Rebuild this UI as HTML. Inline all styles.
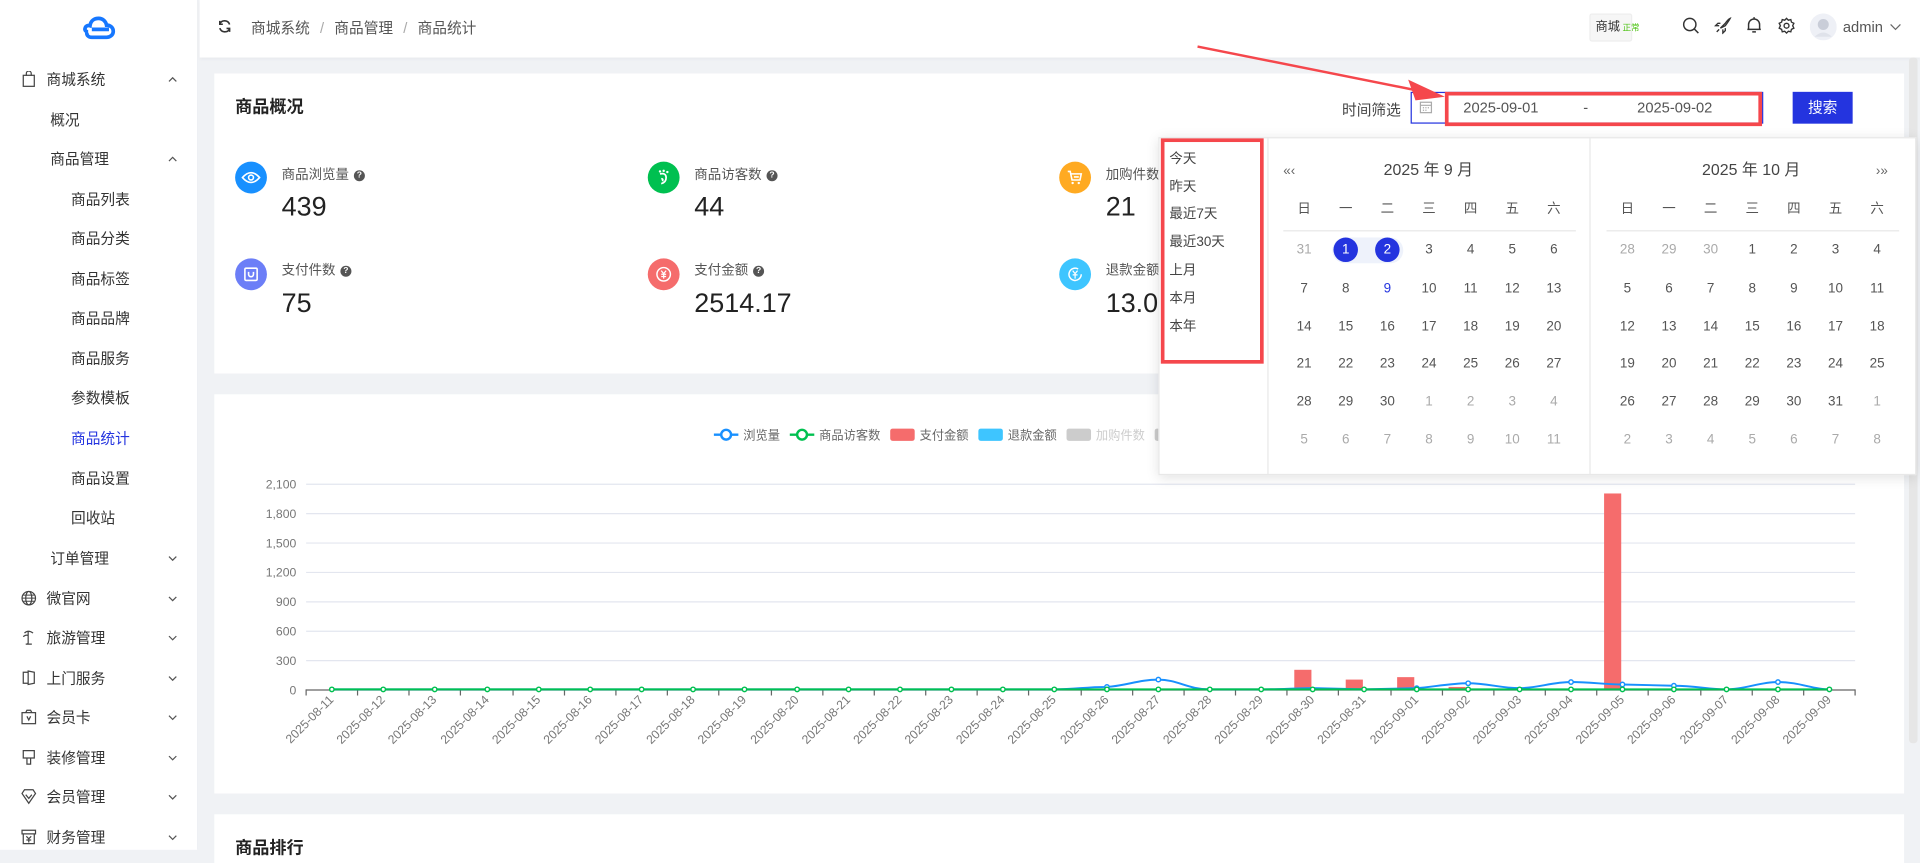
<!DOCTYPE html>
<html><head><meta charset="utf-8">
<style>
*{margin:0;padding:0;box-sizing:border-box}
html,body{width:1920px;height:850px;overflow:hidden;background:#f0f2f5;font-family:"Liberation Sans","Noto Sans CJK SC",sans-serif;color:#333}
#w{position:absolute;left:0;top:0;width:1568px;height:694px;transform:scale(1.22449);transform-origin:0 0;background:#f0f2f5}
.a{position:absolute;white-space:nowrap}
.side{position:absolute;left:0;top:0;width:162px;height:694px;background:#fff;border-right:1px solid #eceef2}
.m{position:absolute;font-size:12px;color:#333;line-height:14px}
.chev{position:absolute;left:136px;width:10px;height:10px}
.hdr{position:absolute;left:163px;top:0;width:1405px;height:47px;background:#fff;box-shadow:0 1px 3px rgba(0,0,0,.04)}
.card{position:absolute;background:#fff}
.ic{position:absolute;width:26px;height:26px;border-radius:50%}
.lbl{position:absolute;font-size:11px;color:#555}
.val{position:absolute;font-size:22px;color:#222}
.q{display:inline-block;width:9px;height:9px;border-radius:50%;background:#555;color:#fff;font-size:7px;line-height:9px;text-align:center;margin-left:4px;vertical-align:1px;font-weight:bold}
.cal{position:absolute;font-size:11px;color:#555;text-align:center;width:24px;margin-left:-12px;line-height:14px}
.g{color:#aaa}
.sc{position:absolute;left:955px;font-size:11px;color:#444}
</style></head><body><div id="w">

<div class="side">
<svg class="a" style="left:67px;top:13px" width="28" height="20" viewBox="0 0 28 20"><path d="M5 13 C3 13 2 11.5 2.5 10 C3 8 5 7.5 6.5 8 C7 4 10 2 13.5 2 C17 2 19.5 4.5 20 7.5 C23 7.5 25.5 9.5 25.5 12.5 C25.5 15.5 23 17.5 20 17.5 L8 17.5 C5 17.5 3.5 15.5 4 13.5" fill="none" stroke="#1677ff" stroke-width="3"/><path d="M8 11 L22 11" stroke="#1677ff" stroke-width="3"/></svg>
<svg class="a" style="left:18px;top:58px" width="11" height="13" viewBox="0 0 11 13"><rect x="1" y="3.5" width="9" height="9" fill="none" stroke="#444"/><path d="M3.5 4 V2 a2 2 0 0 1 4 0 V4" fill="none" stroke="#444"/></svg>
<div class="m" style="left:38px;top:58px">商城系统</div>
<svg class="chev" style="top:60px" viewBox="0 0 10 10"><path d="M2 6.5 L5 3.5 L8 6.5" fill="none" stroke="#555"/></svg>
<div class="m" style="left:41px;top:91px">概况</div>
<div class="m" style="left:41px;top:123px">商品管理</div>
<svg class="chev" style="top:125px" viewBox="0 0 10 10"><path d="M2 6.5 L5 3.5 L8 6.5" fill="none" stroke="#555"/></svg>
<div class="m" style="left:58px;top:156px">商品列表</div>
<div class="m" style="left:58px;top:188px">商品分类</div>
<div class="m" style="left:58px;top:221px">商品标签</div>
<div class="m" style="left:58px;top:253px">商品品牌</div>
<div class="m" style="left:58px;top:286px">商品服务</div>
<div class="m" style="left:58px;top:318px">参数模板</div>
<div class="m" style="left:58px;top:351px;color:#2434df">商品统计</div>
<div class="m" style="left:58px;top:384px">商品设置</div>
<div class="m" style="left:58px;top:416px">回收站</div>
<div class="m" style="left:41px;top:449px">订单管理</div>
<svg class="chev" style="top:451px" viewBox="0 0 10 10"><path d="M2 3.5 L5 6.5 L8 3.5" fill="none" stroke="#555"/></svg>
<svg class="a" style="left:17px;top:482px" width="13" height="13" viewBox="0 0 13 13"><circle cx="6.5" cy="6.5" r="5.5" fill="none" stroke="#444"/><ellipse cx="6.5" cy="6.5" rx="2.5" ry="5.5" fill="none" stroke="#444"/><path d="M1 6.5 H12 M2 4 H11 M2 9 H11" stroke="#444" stroke-width=".8"/></svg>
<div class="m" style="left:38px;top:482px">微官网</div>
<svg class="chev" style="top:484px" viewBox="0 0 10 10"><path d="M2 3.5 L5 6.5 L8 3.5" fill="none" stroke="#555"/></svg>
<svg class="a" style="left:17px;top:514px" width="13" height="13" viewBox="0 0 13 13"><path d="M3 3 Q6 0 10 3 M6 2 V11 Q6 12 4 12 M4 12 H9 M2 6 Q4 4 6 5" fill="none" stroke="#444"/></svg>
<div class="m" style="left:38px;top:514px">旅游管理</div>
<svg class="chev" style="top:516px" viewBox="0 0 10 10"><path d="M2 3.5 L5 6.5 L8 3.5" fill="none" stroke="#555"/></svg>
<svg class="a" style="left:18px;top:547px" width="12" height="13" viewBox="0 0 12 13"><path d="M1 2 H5 V11 H1 Z M5 1 L10 2 V11 L5 12 Z" fill="none" stroke="#444"/></svg>
<div class="m" style="left:38px;top:547px">上门服务</div>
<svg class="chev" style="top:549px" viewBox="0 0 10 10"><path d="M2 3.5 L5 6.5 L8 3.5" fill="none" stroke="#555"/></svg>
<svg class="a" style="left:17px;top:579px" width="13" height="13" viewBox="0 0 13 13"><rect x="1" y="3" width="11" height="9" fill="none" stroke="#444"/><path d="M4 3 L5 1 H8 L9 3 M5 6 L6.5 9 L8 6" fill="none" stroke="#444"/></svg>
<div class="m" style="left:38px;top:579px">会员卡</div>
<svg class="chev" style="top:581px" viewBox="0 0 10 10"><path d="M2 3.5 L5 6.5 L8 3.5" fill="none" stroke="#555"/></svg>
<svg class="a" style="left:17px;top:612px" width="13" height="13" viewBox="0 0 13 13"><path d="M2 1 H11 V7 H2 Z M5 7 V12 H8 V7" fill="none" stroke="#444"/></svg>
<div class="m" style="left:38px;top:612px">装修管理</div>
<svg class="chev" style="top:614px" viewBox="0 0 10 10"><path d="M2 3.5 L5 6.5 L8 3.5" fill="none" stroke="#555"/></svg>
<svg class="a" style="left:17px;top:644px" width="13" height="13" viewBox="0 0 13 13"><path d="M1 4 L3 1 H10 L12 4 L6.5 12 Z M4 5 L6.5 8 L9 5" fill="none" stroke="#444"/></svg>
<div class="m" style="left:38px;top:644px">会员管理</div>
<svg class="chev" style="top:646px" viewBox="0 0 10 10"><path d="M2 3.5 L5 6.5 L8 3.5" fill="none" stroke="#555"/></svg>
<svg class="a" style="left:17px;top:677px" width="13" height="13" viewBox="0 0 13 13"><path d="M1 1 H12 V4 H1 Z M2 4 V12 H11 V4 M4.5 6 L6.5 8 L8.5 6 M6.5 8 V11 M4.5 9 H8.5" fill="none" stroke="#444"/></svg>
<div class="m" style="left:38px;top:677px">财务管理</div>
<svg class="chev" style="top:679px" viewBox="0 0 10 10"><path d="M2 3.5 L5 6.5 L8 3.5" fill="none" stroke="#555"/></svg>
</div>

<div class="hdr"></div>
<svg class="a" style="left:178px;top:16px" width="11" height="11" viewBox="0 0 11 11"><path d="M9.5 4 A4.3 4.3 0 0 0 1.5 3.5 M1.5 7 A4.3 4.3 0 0 0 9.5 7.5" fill="none" stroke="#333" stroke-width="1.3"/><path d="M1.5 1 V3.8 H4 M9.5 10 V7.2 H7" fill="none" stroke="#333" stroke-width="1.3"/></svg>
<div class="a" style="left:205px;top:14px;font-size:12px;color:#555">商城系统 <span style="color:#aaa;margin:0 5px">/</span> 商品管理 <span style="color:#aaa;margin:0 5px">/</span> 商品统计</div>
<div class="a" style="left:1298px;top:11px;width:35px;height:23px;background:#f6f6f6;border:1px solid #eee;border-radius:2px;font-size:10px;line-height:21px;padding-left:4px;color:#333">商城<span style="color:#52c41a;font-size:7px;margin-left:2px">正常</span></div>
<svg class="a" style="left:1374px;top:14px" width="14" height="14" viewBox="0 0 14 14"><circle cx="6" cy="6" r="5" fill="none" stroke="#333" stroke-width="1.2"/><path d="M9.6 9.6 L13 13" stroke="#333" stroke-width="1.2"/></svg>
<svg class="a" style="left:1400px;top:14px" width="14" height="14" viewBox="0 0 14 14"><path d="M5 9 L9 5 Q11 2 13 1 Q12 3 9 7 L5 9 Z M5 5 H3 L1 7 H4 M9 9 V11 L7 13 V10 M4 10 L2 12" fill="none" stroke="#333" stroke-width="1.1"/></svg>
<svg class="a" style="left:1426px;top:13px" width="13" height="15" viewBox="0 0 13 15"><path d="M2 11 V7 a4.5 4.5 0 0 1 9 0 V11 H1 H12 M5 13 H8 M6.5 1 V2.5" fill="none" stroke="#333" stroke-width="1.2"/></svg>
<svg class="a" style="left:1452px;top:14px" width="14" height="14" viewBox="0 0 14 14"><path d="M7 1 L8.5 2.5 L10.5 2 L11 4 L13 5 L12 7 L13 9 L11 10 L10.5 12 L8.5 11.5 L7 13 L5.5 11.5 L3.5 12 L3 10 L1 9 L2 7 L1 5 L3 4 L3.5 2 L5.5 2.5 Z" fill="none" stroke="#333" stroke-width="1.1"/><circle cx="7" cy="7" r="2" fill="none" stroke="#333" stroke-width="1.1"/></svg>
<svg class="a" style="left:1478px;top:11px" width="22" height="22" viewBox="0 0 22 22"><circle cx="11" cy="11" r="11" fill="#eef0f6"/><circle cx="11" cy="9" r="4.5" fill="#c9cdd8"/><path d="M4 19 Q11 12 18 19" fill="#dfe2ea"/></svg>
<div class="a" style="left:1505px;top:15px;font-size:12px;color:#555">admin</div>
<svg class="a" style="left:1543px;top:17px" width="10" height="10" viewBox="0 0 10 10"><path d="M1 3 L5 7 L9 3" fill="none" stroke="#666"/></svg>

<div class="card" style="left:175px;top:60px;width:1380px;height:245px"></div>
<div class="a" style="left:192px;top:77px;font-size:14px;font-weight:bold;color:#222">商品概况</div>

<div class="ic" style="left:192px;top:132px;background:#1890ff"></div>
<svg class="a" style="left:197px;top:138px" width="16" height="14" viewBox="0 0 16 14"><path d="M1 7 Q8 -1 15 7 Q8 15 1 7 Z" fill="none" stroke="#fff" stroke-width="1.3"/><circle cx="8" cy="7" r="2" fill="none" stroke="#fff" stroke-width="1.3"/></svg>
<div class="lbl" style="left:230px;top:134px">商品浏览量<span class="q">?</span></div>
<div class="val" style="left:230px;top:156px">439</div>

<div class="ic" style="left:529px;top:132px;background:#00c050"></div>
<svg class="a" style="left:535px;top:137px" width="14" height="16" viewBox="0 0 14 16"><path d="M4 5 Q9 4 9 8 Q9 12 5 13 M5 9 Q7 9 6 11" fill="none" stroke="#fff" stroke-width="1.4"/><circle cx="4" cy="3" r="1" fill="#fff"/><circle cx="7" cy="2.5" r="1" fill="#fff"/><circle cx="10" cy="3.5" r="1" fill="#fff"/></svg>
<div class="lbl" style="left:567px;top:134px">商品访客数<span class="q">?</span></div>
<div class="val" style="left:567px;top:156px">44</div>

<div class="ic" style="left:865px;top:132px;background:#ffaa22"></div>
<svg class="a" style="left:871px;top:138px" width="14" height="14" viewBox="0 0 14 14"><path d="M1 2 H3 L4.5 9 H11 L12 4 H3.5 M6 6.5 H10" fill="none" stroke="#fff" stroke-width="1.3"/><circle cx="5" cy="11.5" r="1" fill="#fff"/><circle cx="10" cy="11.5" r="1" fill="#fff"/></svg>
<div class="lbl" style="left:903px;top:134px">加购件数</div>
<div class="val" style="left:903px;top:156px">21</div>

<div class="ic" style="left:192px;top:211px;background:#6c7ef7"></div>
<svg class="a" style="left:198px;top:216px" width="14" height="15" viewBox="0 0 14 15"><rect x="2" y="3" width="10" height="10" rx="1" fill="none" stroke="#fff" stroke-width="1.3"/><path d="M5 6 V8 a2 2 0 0 0 4 0 V6" fill="none" stroke="#fff" stroke-width="1.3"/></svg>
<div class="lbl" style="left:230px;top:212px">支付件数<span class="q">?</span></div>
<div class="val" style="left:230px;top:235px">75</div>

<div class="ic" style="left:529px;top:211px;background:#f56c6c"></div>
<svg class="a" style="left:535px;top:217px" width="14" height="14" viewBox="0 0 14 14"><circle cx="7" cy="7" r="5.5" fill="none" stroke="#fff" stroke-width="1.2"/><path d="M5 4 L7 6.5 L9 4 M7 6.5 V10.5 M5 7 H9 M5 8.8 H9" fill="none" stroke="#fff" stroke-width="1"/></svg>
<div class="lbl" style="left:567px;top:212px">支付金额<span class="q">?</span></div>
<div class="val" style="left:567px;top:235px">2514.17</div>

<div class="ic" style="left:865px;top:211px;background:#3ec5ff"></div>
<svg class="a" style="left:871px;top:217px" width="14" height="14" viewBox="0 0 14 14"><path d="M12 7 A5 5 0 1 1 9.5 2.7" fill="none" stroke="#fff" stroke-width="1.2"/><path d="M5 4 L7 6.5 L9 4 M7 6.5 V10.5 M5 7.5 H9" fill="none" stroke="#fff" stroke-width="1"/></svg>
<div class="lbl" style="left:903px;top:212px">退款金额</div>
<div class="val" style="left:903px;top:235px">13.0</div>

<div class="a" style="left:1096px;top:81px;font-size:12px;color:#444">时间筛选</div>
<div class="a" style="left:1152px;top:75px;width:288px;height:26px;border:1px solid #2434df;background:#fff"></div>
<svg class="a" style="left:1159px;top:82px" width="11" height="11" viewBox="0 0 11 11"><rect x="1" y="1.5" width="9" height="8.5" fill="none" stroke="#aaa"/><path d="M1 4 H10 M3 6 H4 M5 6 H6 M7 6 H8 M3 8 H4 M5 8 H6" stroke="#aaa"/></svg>
<div class="a" style="left:1180px;top:75px;width:259px;height:28px;border:3px solid #f5474c"></div>
<div class="a" style="left:1195px;top:81px;font-size:12px;color:#555">2025-09-01</div>
<div class="a" style="left:1293px;top:81px;font-size:12px;color:#555">-</div>
<div class="a" style="left:1337px;top:81px;font-size:12px;color:#555">2025-09-02</div>
<div class="a" style="left:1464px;top:75px;width:49px;height:26px;background:#2434df;color:#fff;font-size:12px;line-height:26px;text-align:center">搜索</div>
<svg class="a" style="left:970px;top:30px" width="220" height="60" viewBox="0 0 220 60"><path d="M8 8 L188 44" stroke="#f5474c" stroke-width="2"/><path d="M210 49 L180 35 L186 52 Z" fill="#f5474c"/></svg>

<div class="card" style="left:175px;top:322px;width:1380px;height:326px"></div>
<svg class="a" style="left:0;top:0" width="1568" height="694" viewBox="0 0 1568 694">
<g font-size="10" fill="#666" font-family="Liberation Sans,Noto Sans CJK SC,sans-serif">
<path d="M583 355 H603" stroke="#1890ff" stroke-width="2"/><circle cx="593" cy="355" r="4" fill="#fff" stroke="#1890ff" stroke-width="2"/><text x="607" y="359">浏览量</text>
<path d="M645 355 H665" stroke="#00c050" stroke-width="2"/><circle cx="655" cy="355" r="4" fill="#fff" stroke="#00c050" stroke-width="2"/><text x="669" y="359">商品访客数</text>
<rect x="727" y="350" width="20" height="10" rx="2" fill="#f56c6c"/><text x="751" y="359">支付金额</text>
<rect x="799" y="350" width="20" height="10" rx="2" fill="#3ec5ff"/><text x="823" y="359">退款金额</text>
<rect x="871" y="350" width="20" height="10" rx="2" fill="#ccc"/><text x="895" y="359" fill="#ccc">加购件数</text>
<rect x="943" y="350" width="20" height="10" rx="2" fill="#ccc"/>
</g>
<g stroke="#e3e6ef" stroke-width="1">
<path d="M250 395.5 H1515 M250 419.5 H1515 M250 443.5 H1515 M250 467.5 H1515 M250 491.5 H1515 M250 515.5 H1515 M250 539.5 H1515"/>
</g>
<path d="M250 563.5 H1515" stroke="#666"/>
<g font-size="10" fill="#777" text-anchor="end" font-family="Liberation Sans,sans-serif">
<text x="242" y="399">2,100</text><text x="242" y="423">1,800</text><text x="242" y="447">1,500</text><text x="242" y="471">1,200</text><text x="242" y="495">900</text><text x="242" y="519">600</text><text x="242" y="543">300</text><text x="242" y="567">0</text>
</g>
<g stroke="#666"><path d="M250 563 V568 M292 563 V568 M334 563 V568 M376 563 V568 M419 563 V568 M461 563 V568 M503 563 V568 M545 563 V568 M587 563 V568 M630 563 V568 M672 563 V568 M714 563 V568 M756 563 V568 M798 563 V568 M840 563 V568 M883 563 V568 M925 563 V568 M967 563 V568 M1009 563 V568 M1051 563 V568 M1093 563 V568 M1136 563 V568 M1178 563 V568 M1220 563 V568 M1262 563 V568 M1304 563 V568 M1346 563 V568 M1389 563 V568 M1431 563 V568 M1473 563 V568 M1515 563 V568"/></g>
<g fill="#f56c6c">
<rect x="1057" y="547" width="14" height="16"/><rect x="1099" y="555" width="14" height="8"/><rect x="1141" y="553" width="14" height="10"/><rect x="1183" y="561" width="14" height="2"/><rect x="1310" y="403" width="14" height="160"/>
</g>
<path d="M271 563 L861 563 C880 563 885 561 904 561 C920 560 930 555 946 555 C962 555 970 563 988 563 L1030 563 C1045 563 1060 562 1072 562 L1114 563 L1157 562 C1170 561 1185 558 1199 558 C1215 558 1225 562 1241 562 C1255 562 1268 557 1283 557 C1300 557 1310 559 1325 559 L1367 560 C1385 560 1395 563 1410 563 C1425 563 1437 557 1452 557 C1470 557 1480 563 1494 563" fill="none" stroke="#1890ff" stroke-width="1.6"/>
<g fill="#fff" stroke="#1890ff" stroke-width="1.2"><circle cx="904" cy="561" r="1.8"/><circle cx="946" cy="555" r="1.8"/><circle cx="1157" cy="562" r="1.8"/><circle cx="1199" cy="558" r="1.8"/><circle cx="1283" cy="557" r="1.8"/><circle cx="1325" cy="559" r="1.8"/><circle cx="1367" cy="560" r="1.8"/><circle cx="1452" cy="557" r="1.8"/></g>
<path d="M271 563 H1494" stroke="#00c050" stroke-width="1.6"/>
<g fill="#fff" stroke="#00c050" stroke-width="1.2">
<circle cx="271" cy="563" r="1.8"/><circle cx="313" cy="563" r="1.8"/><circle cx="355" cy="563" r="1.8"/><circle cx="398" cy="563" r="1.8"/><circle cx="440" cy="563" r="1.8"/><circle cx="482" cy="563" r="1.8"/><circle cx="524" cy="563" r="1.8"/><circle cx="566" cy="563" r="1.8"/><circle cx="608" cy="563" r="1.8"/><circle cx="651" cy="563" r="1.8"/><circle cx="693" cy="563" r="1.8"/><circle cx="735" cy="563" r="1.8"/><circle cx="777" cy="563" r="1.8"/><circle cx="819" cy="563" r="1.8"/><circle cx="861" cy="563" r="1.8"/><circle cx="904" cy="563" r="1.8"/><circle cx="946" cy="563" r="1.8"/><circle cx="988" cy="563" r="1.8"/><circle cx="1030" cy="563" r="1.8"/><circle cx="1072" cy="563" r="1.8"/><circle cx="1114" cy="563" r="1.8"/><circle cx="1157" cy="563" r="1.8"/><circle cx="1199" cy="563" r="1.8"/><circle cx="1241" cy="563" r="1.8"/><circle cx="1283" cy="563" r="1.8"/><circle cx="1325" cy="563" r="1.8"/><circle cx="1367" cy="563" r="1.8"/><circle cx="1410" cy="563" r="1.8"/><circle cx="1452" cy="563" r="1.8"/><circle cx="1494" cy="563" r="1.8"/>
</g>
<g font-size="10" fill="#777" text-anchor="end" font-family="Liberation Sans,sans-serif">
<text transform="translate(273,572) rotate(-45)">2025-08-11</text>
<text transform="translate(315,572) rotate(-45)">2025-08-12</text>
<text transform="translate(357,572) rotate(-45)">2025-08-13</text>
<text transform="translate(400,572) rotate(-45)">2025-08-14</text>
<text transform="translate(442,572) rotate(-45)">2025-08-15</text>
<text transform="translate(484,572) rotate(-45)">2025-08-16</text>
<text transform="translate(526,572) rotate(-45)">2025-08-17</text>
<text transform="translate(568,572) rotate(-45)">2025-08-18</text>
<text transform="translate(610,572) rotate(-45)">2025-08-19</text>
<text transform="translate(653,572) rotate(-45)">2025-08-20</text>
<text transform="translate(695,572) rotate(-45)">2025-08-21</text>
<text transform="translate(737,572) rotate(-45)">2025-08-22</text>
<text transform="translate(779,572) rotate(-45)">2025-08-23</text>
<text transform="translate(821,572) rotate(-45)">2025-08-24</text>
<text transform="translate(863,572) rotate(-45)">2025-08-25</text>
<text transform="translate(906,572) rotate(-45)">2025-08-26</text>
<text transform="translate(948,572) rotate(-45)">2025-08-27</text>
<text transform="translate(990,572) rotate(-45)">2025-08-28</text>
<text transform="translate(1032,572) rotate(-45)">2025-08-29</text>
<text transform="translate(1074,572) rotate(-45)">2025-08-30</text>
<text transform="translate(1116,572) rotate(-45)">2025-08-31</text>
<text transform="translate(1159,572) rotate(-45)">2025-09-01</text>
<text transform="translate(1201,572) rotate(-45)">2025-09-02</text>
<text transform="translate(1243,572) rotate(-45)">2025-09-03</text>
<text transform="translate(1285,572) rotate(-45)">2025-09-04</text>
<text transform="translate(1327,572) rotate(-45)">2025-09-05</text>
<text transform="translate(1369,572) rotate(-45)">2025-09-06</text>
<text transform="translate(1412,572) rotate(-45)">2025-09-07</text>
<text transform="translate(1454,572) rotate(-45)">2025-09-08</text>
<text transform="translate(1496,572) rotate(-45)">2025-09-09</text>
</g>
</svg>

<div class="card" style="left:175px;top:665px;width:1380px;height:40px"></div>
<div class="a" style="left:192px;top:682px;font-size:14px;font-weight:bold;color:#222">商品排行</div>
<div class="a" style="left:1559px;top:47px;width:7px;height:560px;background:#e6e6e6;border-radius:3px"></div>

<!-- popover -->
<div class="a" style="left:946px;top:112px;width:619px;height:276px;background:#fff;box-shadow:0 2px 10px rgba(0,0,0,.12);border:1px solid #e8e8e8"></div>
<div class="a" style="left:1035px;top:112px;width:1px;height:276px;background:#e8e8e8"></div>
<div class="a" style="left:1298px;top:112px;width:1px;height:276px;background:#e8e8e8"></div>
<div class="a" style="left:948px;top:113px;width:84px;height:184px;border:3px solid #f5474c"></div>
<div class="sc" style="top:121px">今天</div>
<div class="sc" style="top:144px">昨天</div>
<div class="sc" style="top:166px">最近7天</div>
<div class="sc" style="top:189px">最近30天</div>
<div class="sc" style="top:212px">上月</div>
<div class="sc" style="top:235px">本月</div>
<div class="sc" style="top:258px">本年</div>
<div class="a" style="left:1048px;top:134px;font-size:11px;color:#666">«‹</div>
<div class="a" style="left:1130px;top:128px;font-size:13px;color:#444">2025 年 9 月</div>
<div class="a" style="left:1390px;top:128px;font-size:13px;color:#444">2025 年 10 月</div>
<div class="a" style="left:1532px;top:134px;font-size:11px;color:#666">›»</div>
<div class="a" style="left:1048px;top:188px;width:239px;height:1px;background:#e8e8e8"></div>
<div class="a" style="left:1312px;top:188px;width:239px;height:1px;background:#e8e8e8"></div>
<div class="a" style="left:1088px;top:194px;width:58px;height:21px;background:#eef2fb;border-radius:11px"></div>
<div class="a" style="left:1089px;top:194px;width:20px;height:20px;background:#2434df;border-radius:50%"></div>
<div class="a" style="left:1123px;top:194px;width:20px;height:20px;background:#2434df;border-radius:50%"></div>

<div class="cal" style="left:1065px;top:164px">日</div><div class="cal" style="left:1099px;top:164px">一</div><div class="cal" style="left:1133px;top:164px">二</div><div class="cal" style="left:1167px;top:164px">三</div><div class="cal" style="left:1201px;top:164px">四</div><div class="cal" style="left:1235px;top:164px">五</div><div class="cal" style="left:1269px;top:164px">六</div>
<div class="cal" style="left:1329px;top:164px">日</div><div class="cal" style="left:1363px;top:164px">一</div><div class="cal" style="left:1397px;top:164px">二</div><div class="cal" style="left:1431px;top:164px">三</div><div class="cal" style="left:1465px;top:164px">四</div><div class="cal" style="left:1499px;top:164px">五</div><div class="cal" style="left:1533px;top:164px">六</div>

<div class="cal g" style="left:1065px;top:197px">31</div><div class="cal" style="left:1099px;top:197px;color:#fff">1</div><div class="cal" style="left:1133px;top:197px;color:#fff">2</div><div class="cal" style="left:1167px;top:197px">3</div><div class="cal" style="left:1201px;top:197px">4</div><div class="cal" style="left:1235px;top:197px">5</div><div class="cal" style="left:1269px;top:197px">6</div>
<div class="cal" style="left:1065px;top:229px">7</div><div class="cal" style="left:1099px;top:229px">8</div><div class="cal" style="left:1133px;top:229px;color:#2434df">9</div><div class="cal" style="left:1167px;top:229px">10</div><div class="cal" style="left:1201px;top:229px">11</div><div class="cal" style="left:1235px;top:229px">12</div><div class="cal" style="left:1269px;top:229px">13</div>
<div class="cal" style="left:1065px;top:260px">14</div><div class="cal" style="left:1099px;top:260px">15</div><div class="cal" style="left:1133px;top:260px">16</div><div class="cal" style="left:1167px;top:260px">17</div><div class="cal" style="left:1201px;top:260px">18</div><div class="cal" style="left:1235px;top:260px">19</div><div class="cal" style="left:1269px;top:260px">20</div>
<div class="cal" style="left:1065px;top:290px">21</div><div class="cal" style="left:1099px;top:290px">22</div><div class="cal" style="left:1133px;top:290px">23</div><div class="cal" style="left:1167px;top:290px">24</div><div class="cal" style="left:1201px;top:290px">25</div><div class="cal" style="left:1235px;top:290px">26</div><div class="cal" style="left:1269px;top:290px">27</div>
<div class="cal" style="left:1065px;top:321px">28</div><div class="cal" style="left:1099px;top:321px">29</div><div class="cal" style="left:1133px;top:321px">30</div><div class="cal g" style="left:1167px;top:321px">1</div><div class="cal g" style="left:1201px;top:321px">2</div><div class="cal g" style="left:1235px;top:321px">3</div><div class="cal g" style="left:1269px;top:321px">4</div>
<div class="cal g" style="left:1065px;top:352px">5</div><div class="cal g" style="left:1099px;top:352px">6</div><div class="cal g" style="left:1133px;top:352px">7</div><div class="cal g" style="left:1167px;top:352px">8</div><div class="cal g" style="left:1201px;top:352px">9</div><div class="cal g" style="left:1235px;top:352px">10</div><div class="cal g" style="left:1269px;top:352px">11</div>

<div class="cal g" style="left:1329px;top:197px">28</div><div class="cal g" style="left:1363px;top:197px">29</div><div class="cal g" style="left:1397px;top:197px">30</div><div class="cal" style="left:1431px;top:197px">1</div><div class="cal" style="left:1465px;top:197px">2</div><div class="cal" style="left:1499px;top:197px">3</div><div class="cal" style="left:1533px;top:197px">4</div>
<div class="cal" style="left:1329px;top:229px">5</div><div class="cal" style="left:1363px;top:229px">6</div><div class="cal" style="left:1397px;top:229px">7</div><div class="cal" style="left:1431px;top:229px">8</div><div class="cal" style="left:1465px;top:229px">9</div><div class="cal" style="left:1499px;top:229px">10</div><div class="cal" style="left:1533px;top:229px">11</div>
<div class="cal" style="left:1329px;top:260px">12</div><div class="cal" style="left:1363px;top:260px">13</div><div class="cal" style="left:1397px;top:260px">14</div><div class="cal" style="left:1431px;top:260px">15</div><div class="cal" style="left:1465px;top:260px">16</div><div class="cal" style="left:1499px;top:260px">17</div><div class="cal" style="left:1533px;top:260px">18</div>
<div class="cal" style="left:1329px;top:290px">19</div><div class="cal" style="left:1363px;top:290px">20</div><div class="cal" style="left:1397px;top:290px">21</div><div class="cal" style="left:1431px;top:290px">22</div><div class="cal" style="left:1465px;top:290px">23</div><div class="cal" style="left:1499px;top:290px">24</div><div class="cal" style="left:1533px;top:290px">25</div>
<div class="cal" style="left:1329px;top:321px">26</div><div class="cal" style="left:1363px;top:321px">27</div><div class="cal" style="left:1397px;top:321px">28</div><div class="cal" style="left:1431px;top:321px">29</div><div class="cal" style="left:1465px;top:321px">30</div><div class="cal" style="left:1499px;top:321px">31</div><div class="cal g" style="left:1533px;top:321px">1</div>
<div class="cal g" style="left:1329px;top:352px">2</div><div class="cal g" style="left:1363px;top:352px">3</div><div class="cal g" style="left:1397px;top:352px">4</div><div class="cal g" style="left:1431px;top:352px">5</div><div class="cal g" style="left:1465px;top:352px">6</div><div class="cal g" style="left:1499px;top:352px">7</div><div class="cal g" style="left:1533px;top:352px">8</div>

</div></body></html>
